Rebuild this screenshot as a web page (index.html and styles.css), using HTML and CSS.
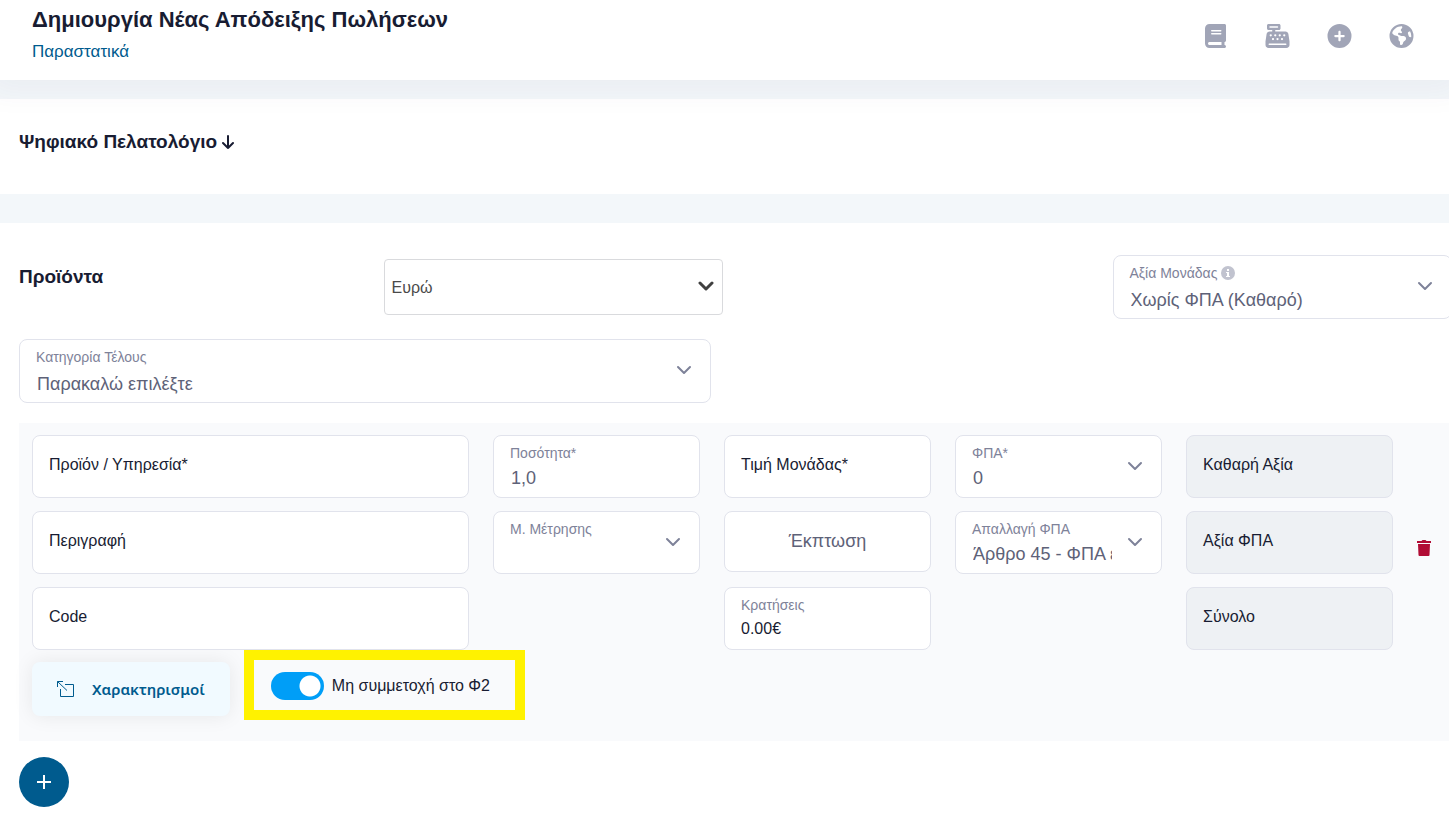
FILE: index.html
```html
<!DOCTYPE html>
<html lang="el">
<head>
<meta charset="utf-8">
<meta name="viewport" content="width=device-width, initial-scale=1">
<title>Δημιουργία Νέας Απόδειξης Πωλήσεων</title>
<link rel="stylesheet" href="styles.css">
</head>
<body>
<svg class="sprite" aria-hidden="true">
  <symbol id="chevron" viewBox="0 0 16 16"><path d="M2 5l6 6 6-6" fill="none" stroke="currentColor" stroke-linecap="round" stroke-linejoin="round"/></symbol>
</svg>

<header class="topbar">
  <div class="topbar-titles">
    <h1 class="page-title">Δημιουργία Νέας Απόδειξης Πωλήσεων</h1>
    <a class="breadcrumb" href="#">Παραστατικά</a>
  </div>
  <nav class="topbar-actions">
    <button class="icon-button" type="button" aria-label="Βιβλίο"><svg viewBox="0 0 448 512"><path d="M96 0C43 0 0 43 0 96V416c0 53 43 96 96 96H384h32c17.7 0 32-14.3 32-32s-14.3-32-32-32V384c17.7 0 32-14.3 32-32V32c0-17.7-14.3-32-32-32H384 96zm0 384H352v64H96c-17.7 0-32-14.3-32-32s14.3-32 32-32zm32-240c0-8.8 7.2-16 16-16H336c8.8 0 16 7.2 16 16s-7.2 16-16 16H144c-8.8 0-16-7.2-16-16zm16 48H336c8.8 0 16 7.2 16 16s-7.2 16-16 16H144c-8.8 0-16-7.2-16-16s7.2-16 16-16z"/></svg></button>
    <button class="icon-button" type="button" aria-label="Ταμείο"><svg viewBox="0 0 512 512"><path d="M64 0C46.3 0 32 14.3 32 32V96c0 17.7 14.3 32 32 32h80v32H87c-31.6 0-58.5 23.1-63.3 54.4L1.1 364.1C.4 368.8 0 373.6 0 378.4V448c0 35.3 28.7 64 64 64H448c35.3 0 64-28.7 64-64V378.4c0-4.8-.4-9.6-1.1-14.4L488.2 214.4C483.5 183.1 456.6 160 425 160H208V128h80c17.7 0 32-14.3 32-32V32c0-17.7-14.3-32-32-32H64zM96 48H256c8.8 0 16 7.2 16 16s-7.2 16-16 16H96c-8.8 0-16-7.2-16-16s7.2-16 16-16zM64 432c0-8.8 7.2-16 16-16H432c8.8 0 16 7.2 16 16s-7.2 16-16 16H80c-8.8 0-16-7.2-16-16zm48-168a24 24 0 1 1 0-48 24 24 0 1 1 0 48zm120-24a24 24 0 1 1 -48 0 24 24 0 1 1 48 0zM160 344a24 24 0 1 1 0-48 24 24 0 1 1 0 48zM328 240a24 24 0 1 1 -48 0 24 24 0 1 1 48 0zM256 344a24 24 0 1 1 0-48 24 24 0 1 1 0 48zM424 240a24 24 0 1 1 -48 0 24 24 0 1 1 48 0zM352 344a24 24 0 1 1 0-48 24 24 0 1 1 0 48z"/></svg></button>
    <button class="icon-button" type="button" aria-label="Νέο"><svg viewBox="0 0 512 512"><path d="M256 512A256 256 0 1 0 256 0a256 256 0 1 0 0 512zM232 344V280H168c-13.3 0-24-10.7-24-24s10.7-24 24-24h64V168c0-13.3 10.7-24 24-24s24 10.7 24 24v64h64c13.3 0 24 10.7 24 24s-10.7 24-24 24H280v64c0 13.3-10.7 24-24 24s-24-10.7-24-24z"/></svg></button>
    <button class="icon-button" type="button" aria-label="Γλώσσα"><svg viewBox="0 0 512 512"><path d="M57.7 193l9.4 16.4c8.3 14.5 21.9 25.2 38 29.8L163 255.7c17.2 4.9 29 20.6 29 38.5v39.9c0 11 6.2 21 16 25.9s16 14.9 16 25.9v39c0 15.6 14.9 26.9 29.9 22.6c16.1-4.6 28.6-17.5 32.7-33.8l2.8-11.2c4.2-16.9 15.2-31.4 30.3-40l8.1-4.6c15-8.5 24.2-24.5 24.2-41.7v-8.3c0-12.7-5.1-24.9-14.1-33.9l-3.9-3.9c-9-9-21.2-14.1-33.9-14.1H257c-11.1 0-22.1-2.9-31.8-8.4l-34.5-19.7c-4.3-2.5-7.6-6.5-9.2-11.2c-3.2-9.6 1.1-20 10.2-24.5l5.9-3c6.6-3.3 14.3-3.9 21.3-1.5l23.2 7.7c8.2 2.7 17.2-.4 21.9-7.5c4.7-7 4.2-16.3-1.2-22.8l-13.6-16.3c-10-12-9.9-29.5 .3-41.3l15.7-18.3c8.8-10.3 10.2-25 3.5-36.7l-2.4-4.2c-3.5-.2-6.9-.3-10.4-.3C163.1 48 84.4 108.9 57.7 193zM464 256c0-36.8-9.6-71.4-26.4-101.5L412 164.8c-15.7 6.3-23.8 23.8-18.5 39.8l16.9 50.7c3.5 10.4 12 18.3 22.6 20.9l29.1 7.3c1.2-9 1.8-18.2 1.8-27.5zM0 256a256 256 0 1 1 512 0A256 256 0 1 1 0 256z"/></svg></button>
  </nav>
</header>

<main class="content">
  <section class="card card-customers">
    <h2 class="section-title">Ψηφιακό Πελατολόγιο
      <svg class="arrow-down" viewBox="0 0 12 14" aria-hidden="true"><path d="M6 1v12M1 8l5 5 5-5" fill="none" stroke="currentColor" stroke-width="2" stroke-linecap="round" stroke-linejoin="round"/></svg>
    </h2>
  </section>

  <section class="card card-products">
    <div class="products-head">
      <h2 class="section-title">Προϊόντα</h2>
      <div class="currency">
        <select class="currency-select" aria-label="Νόμισμα"><option>Ευρώ</option></select>
        <svg class="chevron chevron-dark" aria-hidden="true"><use href="#chevron"/></svg>
      </div>
      <div class="field field-tall unit-value">
        <label class="field-label" for="unit-value">Αξία Μονάδας
          <svg class="info" viewBox="0 0 14 14" aria-hidden="true"><circle cx="7" cy="7" r="7" fill="currentColor"/><path d="M6 3h2v2H6zM5 6h3v4h1v1H5v-1h1V7H5z" fill="#fff"/></svg>
        </label>
        <select class="field-select" id="unit-value"><option>Χωρίς ΦΠΑ (Καθαρό)</option></select>
        <svg class="chevron" aria-hidden="true"><use href="#chevron"/></svg>
      </div>
    </div>

    <div class="field field-tall fee-category">
      <label class="field-label" for="fee">Κατηγορία Τέλους</label>
      <select class="field-select" id="fee"><option>Παρακαλώ επιλέξτε</option></select>
      <svg class="chevron" aria-hidden="true"><use href="#chevron"/></svg>
    </div>

    <div class="line-item">
      <div class="line-grid">
        <div class="field field-empty"><input class="blank-input" id="product" type="text"><label class="blank-label" for="product">Προϊόν / Υπηρεσία*</label></div>
        <div class="field"><label class="field-label" for="qty">Ποσότητα*</label><input class="field-input" id="qty" type="text" value="1,0"></div>
        <div class="field field-empty"><input class="blank-input" id="price" type="text"><label class="blank-label" for="price">Τιμή Μονάδας*</label></div>
        <div class="field">
          <label class="field-label" for="vat">ΦΠΑ*</label>
          <select class="field-select" id="vat"><option>0</option></select>
          <svg class="chevron" aria-hidden="true"><use href="#chevron"/></svg>
        </div>
        <div class="field field-empty field-readonly"><input class="blank-input" id="net" type="text" readonly><label class="blank-label" for="net">Καθαρή Αξία</label></div>

        <div class="field field-empty row-start"><input class="blank-input" id="description" type="text"><label class="blank-label" for="description">Περιγραφή</label></div>
        <div class="field">
          <label class="field-label" for="measure">Μ. Μέτρησης</label>
          <select class="field-select" id="measure"><option></option></select>
          <svg class="chevron" aria-hidden="true"><use href="#chevron"/></svg>
        </div>
        <input class="discount" type="text" placeholder="Έκπτωση" aria-label="Έκπτωση">
        <div class="field">
          <label class="field-label" for="exemption">Απαλλαγή ΦΠΑ</label>
          <select class="field-select" id="exemption"><option>Άρθρο 45 - ΦΠΑ ε</option></select>
          <svg class="chevron" aria-hidden="true"><use href="#chevron"/></svg>
        </div>
        <div class="field field-empty field-readonly"><input class="blank-input" id="vat-value" type="text" readonly><label class="blank-label" for="vat-value">Αξία ΦΠΑ</label></div>
        <button class="delete-button" type="button" aria-label="Διαγραφή">
          <svg viewBox="0 0 14 16" aria-hidden="true"><path d="M0 1h4.500l1-1h3l1 1H14v2H0zM1 4h12l-.5 11q0 1-1 1h-9q-1 0-1-1z" fill="currentColor"/></svg>
        </button>

        <div class="field field-empty row-start"><input class="blank-input" id="code" type="text"><label class="blank-label" for="code">Code</label></div>
        <div class="field withholdings"><label class="field-label" for="withholdings">Κρατήσεις</label><output class="field-value" id="withholdings">0.00€</output></div>
        <div class="field field-empty field-readonly total"><input class="blank-input" id="total" type="text" readonly><label class="blank-label" for="total">Σύνολο</label></div>
      </div>

      <div class="line-actions">
        <button class="classify-button" type="button">
          <svg class="classify-icon" viewBox="0 0 18 18" aria-hidden="true"><path d="M9 4.500h8.500v12h-13V9M1.500 7V1.500H7M1.500 1.500L11 10.500" fill="none" stroke="currentColor"/></svg>
          Χαρακτηρισμοί
        </button>
        <label class="toggle">
          <input class="toggle-input" type="checkbox" role="switch" checked>
          Μη συμμετοχή στο Φ2
        </label>
      </div>
    </div>

    <button class="add-button" type="button" aria-label="Προσθήκη">
      <svg viewBox="0 0 14 14" aria-hidden="true"><path d="M7 0v14M0 7h14" stroke="currentColor" stroke-width="2"/></svg>
    </button>
  </section>
</main>
</body>
</html>
```

FILE: styles.css
```css
* { box-sizing: border-box; }

body {
  margin: 0;
  min-height: 100vh;
  display: flex;
  flex-direction: column;
  background: #f3f7fa;
  color: #181c32;
  font-family: "Liberation Sans", Arial, sans-serif;
  font-size: 16px;
}

h1, h2 { margin: 0; }
button, input, select { font: inherit; color: inherit; margin: 0; }
button { border: 0; padding: 0; cursor: pointer; }
.sprite { display: none; }

.topbar {
  position: relative;
  z-index: 1;
  display: flex;
  justify-content: space-between;
  align-items: flex-start;
  height: 80px;
  padding: 6px 35px 0 32px;
  background: #fff;
  box-shadow: 0 0 28px 12px rgba(82, 63, 105, 0.05);
}
.topbar-titles { display: flex; flex-direction: column; gap: 5px; }
.page-title { font-size: 22px; line-height: 28px; }
.breadcrumb { color: #005b8e; font-size: 17px; line-height: 26px; text-decoration: none; }
.topbar-actions { display: flex; gap: 37px; padding-top: 18px; }
.icon-button { width: 25px; height: 24px; background: none; color: #a1a5b7; }
.icon-button svg { display: block; width: 100%; height: 100%; fill: currentColor; }

.content { flex: 1; display: flex; flex-direction: column; gap: 29px; padding-top: 19px; }
.card { background: #fff; overflow: hidden; }
.card-customers { padding: 30px 19px 39px; }
.card-products { flex: 1; padding: 32px 0 8px 19px; }
.section-title { font-size: 19px; line-height: 26px; }
.arrow-down { width: 12px; height: 14px; vertical-align: -1px; }

.products-head {
  display: grid;
  grid-template-columns: repeat(4, minmax(0, 1fr));
  gap: 25px;
  align-items: center;
  margin-right: -3px;
}
.products-head .section-title { align-self: start; padding-top: 9px; }
.unit-value { grid-column: 4; }

.currency { position: relative; }
.currency-select {
  appearance: none;
  display: block;
  width: 100%;
  height: 56px;
  padding: 0 32px 0 7px;
  border: 1px solid #d9dadd;
  border-radius: 4px;
  background: #fff;
  color: #4a4a4a;
}

.field {
  position: relative;
  display: flex;
  flex-direction: column;
  gap: 4px;
  height: 63px;
  padding: 8px 0 0 16px;
  border: 1px solid #e1e3ec;
  border-radius: 8px;
  background: #fff;
}
.field-tall { gap: 6px; height: 64px; }
.field-label { color: #7e8299; font-size: 14px; line-height: 18px; }
.field-select, .field-input {
  appearance: none;
  width: 100%;
  height: 24px;
  padding: 0 49px 0 1px;
  border: 0;
  outline: 0;
  background: transparent;
  color: #5e6278;
  font-size: 18px;
}
.field-value { line-height: 22px; }
.info { width: 14px; height: 14px; color: #c1c3cf; vertical-align: -2px; }

.chevron {
  position: absolute;
  top: 50%;
  right: 18px;
  width: 16px;
  height: 16px;
  margin-top: -9px;
  color: #7e8299;
  stroke-width: 2;
  pointer-events: none;
}
.chevron-dark { right: 9px; color: #404040; stroke-width: 3; }

.field-empty { display: grid; padding: 0; }
.blank-input {
  grid-area: 1 / 1;
  width: 100%;
  padding: 0 16px;
  border: 0;
  border-radius: 8px;
  background: transparent;
}
.blank-label { grid-area: 1 / 1; padding: 19px 16px 0; line-height: 20px; pointer-events: none; }
.field-readonly { background: #eef1f4; }

.fee-category { width: 692px; max-width: 100%; margin-top: 20px; }

.line-item { margin-top: 20px; padding: 12px 0 25px 13px; background: #f9fafc; }
.line-grid {
  display: grid;
  grid-template-columns: minmax(0, 437fr) repeat(4, minmax(0, 207fr)) 32px;
  gap: 13px 24px;
}
.row-start { grid-column: 1; }
.withholdings { grid-column: 3; }
.total { grid-column: 5; }
.discount {
  width: 100%;
  height: 61px;
  border: 1px solid #e1e3ec;
  border-radius: 8px;
  background: #fff;
  font-size: 18px;
  text-align: center;
}
.discount::placeholder { color: #5e6278; opacity: 1; }
.delete-button { padding-top: 10px; background: none; color: #b10c35; text-align: left; }
.delete-button svg { display: block; width: 14px; height: 16px; }

.line-actions { display: flex; gap: 24px; height: 56px; margin-top: 10px; }
.classify-button {
  display: flex;
  align-items: center;
  align-self: flex-end;
  gap: 18px;
  height: 54px;
  padding: 0 25px 0 24px;
  border-radius: 8px;
  background: #f1faff;
  box-shadow: 0 0 20px rgba(0, 0, 0, 0.08);
  color: #005b8e;
  font: 600 15px "Noto Sans", sans-serif;
}
.classify-icon { width: 18px; height: 18px; }
.toggle {
  display: flex;
  align-items: center;
  gap: 8px;
  height: 50px;
  padding: 2px 25px 0 17px;
  outline: 10px solid #fff200;
  background: #f9fafc;
}
.toggle-input {
  appearance: none;
  width: 53px;
  height: 28px;
  margin: 0;
  border-radius: 14px;
  background: radial-gradient(circle at 39px 14px, #fff 10px, #009ef7 11px);
}

.add-button {
  display: grid;
  place-items: center;
  width: 50px;
  height: 50px;
  margin-top: 16px;
  border-radius: 50%;
  background: #005b8e;
  color: #fff;
}
.add-button svg { width: 14px; height: 14px; }
```
